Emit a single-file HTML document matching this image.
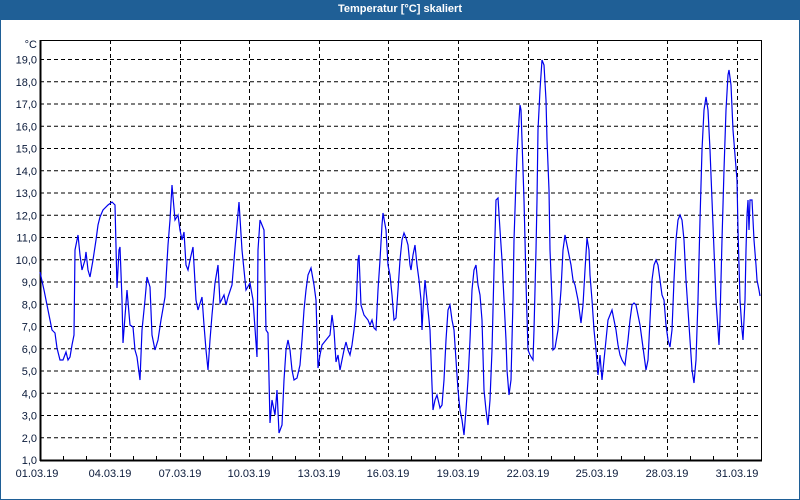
<!DOCTYPE html>
<html><head><meta charset="utf-8"><style>
html,body{margin:0;padding:0;width:800px;height:500px;overflow:hidden;background:#fff;font-family:"Liberation Sans",sans-serif}
.t{position:absolute;left:0;top:0;width:800px;height:20px;background:#1f5f96;color:#fff;font-weight:bold;font-size:11px;line-height:19px;text-align:center}
.b{position:absolute;left:0;top:20px;width:798px;height:479px;border:1px solid #1f5f96;border-top:none}
svg{position:absolute;left:0;top:0}
text{font-family:"Liberation Sans",sans-serif;font-size:11px;fill:#0a1a3a}
</style></head><body>
<div class="t">Temperatur [°C] skaliert</div>
<div class="b"></div>
<svg width="800" height="500" viewBox="0 0 800 500">
<g stroke="#000" stroke-width="1" stroke-dasharray="4,3" fill="none">
<path d="M40 437.75H761M40 415.5H761M40 393.25H761M40 371H761M40 348.75H761M40 326.5H761M40 304.25H761M40 282H761M40 259.75H761M40 237.5H761M40 215.25H761M40 193H761M40 170.75H761M40 148.5H761M40 126.25H761M40 104H761M40 81.75H761M40 59.5H761"/>
<path d="M110.5 40V460M180.5 40V460M249.5 40V460M319.5 40V460M388.5 40V460M458.5 40V460M528.5 40V460M597.5 40V460M667.5 40V460M737.5 40V460"/>
</g>
<g stroke="#000" fill="none">
<rect x="40.5" y="40.5" width="721" height="419.5" stroke-width="1"/>
<path d="M40.5 40V461M40 460.5H762" stroke-width="2"/>
<path d="M63.5 460V456M86.5 460V456M133.5 460V456M156.5 460V456M203.5 460V456M226.5 460V456M272.5 460V456M295.5 460V456M342.5 460V456M365.5 460V456M411.5 460V456M435.5 460V456M481.5 460V456M504.5 460V456M551.5 460V456M574.5 460V456M621.5 460V456M644.5 460V456M690.5 460V456M713.5 460V456"/>
</g>
<polyline fill="none" stroke="#0000ee" stroke-width="1.2" points="40,272 44,290 48,310 52,330 55,333 57,348 60,360 63,360 66,352 68,360 70,357 72,345 74,335 75,250 78,235 80,255 82,270 85,260 86,252 88,270 90,277 93,260 96,240 98,225 100,217 103,210 108,205 112,202 115,205 117,288 119,250 120,247 122,300 123,343 127,290 130,325 133,327 135,350 137,357 140,380 142,330 145,300 147,277 150,287 152,335 155,350 158,340 161,320 165,297 168,245 170,220 172,185 175,220 178,215 180,230 182,240 184,232 186,265 188,270 190,260 193,247 196,300 198,310 202,297 204,325 206,350 208,370 210,340 212,315 215,283 218,265 220,303 224,295 226,305 228,297 232,285 235,248 239,202 242,250 246,290 250,283 253,300 257,357 258,250 260,220 262,225 264,230 266,330 268,333 270,423 272,400 275,415 277,390 279,433 282,425 284,380 286,350 288,340 290,350 292,370 294,380 297,378 300,365 302,340 304,310 306,290 308,275 311,268 314,285 316,300 318,368 320,355 322,345 326,340 330,335 332,315 334,330 336,362 338,355 340,370 342,360 344,350 346,342 348,350 350,355 352,345 354,330 356,310 358,260 359,255 361,305 364,315 368,320 370,325 372,320 374,328 376,330 378,290 380,260 382,225 383,213 386,230 388,265 390,275 392,295 394,320 396,318 398,290 400,260 402,240 404,233 406,238 408,245 410,265 411,270 413,255 415,245 417,265 419,280 421,300 422,330 423,310 425,280 427,300 430,330 432,385 433,410 435,400 437,395 440,408 442,405 444,380 446,340 448,310 450,305 452,320 454,330 456,360 458,390 460,410 462,420 464,435 466,410 468,380 470,340 472,290 474,270 476,265 478,285 480,295 482,320 484,390 486,410 488,425 490,400 492,350 494,270 496,200 498,198 500,230 502,260 504,300 506,340 507,370 509,395 511,380 513,300 514,240 516,180 517,155 519,120 520,105 521,110 522,140 524,200 525,240 526,283 528,350 530,355 533,360 534,330 536,250 537,200 538,130 540,90 542,60 544,65 546,100 547,140 549,190 550,250 552,300 553,350 555,348 558,330 561,290 563,250 565,235 567,245 569,255 571,265 573,280 575,285 578,300 581,323 583,305 585,270 587,238 589,250 590,275 592,300 594,330 596,350 598,375 600,355 602,380 604,360 606,340 608,320 610,315 612,310 614,320 616,330 618,345 620,355 622,360 625,365 628,340 630,320 632,305 634,303 636,305 638,315 640,325 642,340 644,355 646,370 648,360 650,320 652,280 654,265 656,260 658,265 660,280 662,295 664,300 666,325 668,340 670,347 672,330 674,280 676,240 678,220 680,215 682,220 684,240 686,280 688,310 690,340 692,370 694,383 696,360 698,300 700,220 702,150 704,110 706,97 708,110 710,150 712,200 714,250 716,300 718,330 719,345 720,320 722,240 724,170 726,110 728,75 729,70 731,85 733,130 735,155 737,180 738,230 740,300 742,330 743,340 745,300 746,250 747,215 748,200 749,230 750,200 752,200 754,240 756,265 757,280 759,290 760,296"/>
<g text-anchor="end">
<text x="37" y="48">°C</text>
<text x="37" y="63.5">19,0</text><text x="37" y="85.75">18,0</text><text x="37" y="108">17,0</text><text x="37" y="130.25">16,0</text><text x="37" y="152.5">15,0</text><text x="37" y="174.75">14,0</text><text x="37" y="197">13,0</text><text x="37" y="219.25">12,0</text><text x="37" y="241.5">11,0</text><text x="37" y="263.75">10,0</text><text x="37" y="286">9,0</text><text x="37" y="308.25">8,0</text><text x="37" y="330.5">7,0</text><text x="37" y="352.75">6,0</text><text x="37" y="375">5,0</text><text x="37" y="397.25">4,0</text><text x="37" y="419.5">3,0</text><text x="37" y="441.75">2,0</text><text x="37" y="464">1,0</text>
</g>
<g text-anchor="middle">
<text x="37" y="477">01.03.19</text><text x="110" y="477">04.03.19</text><text x="180" y="477">07.03.19</text><text x="249" y="477">10.03.19</text><text x="319" y="477">13.03.19</text><text x="388" y="477">16.03.19</text><text x="458" y="477">19.03.19</text><text x="528" y="477">22.03.19</text><text x="597" y="477">25.03.19</text><text x="667" y="477">28.03.19</text><text x="737" y="477">31.03.19</text>
</g>
</svg>
</body></html>
